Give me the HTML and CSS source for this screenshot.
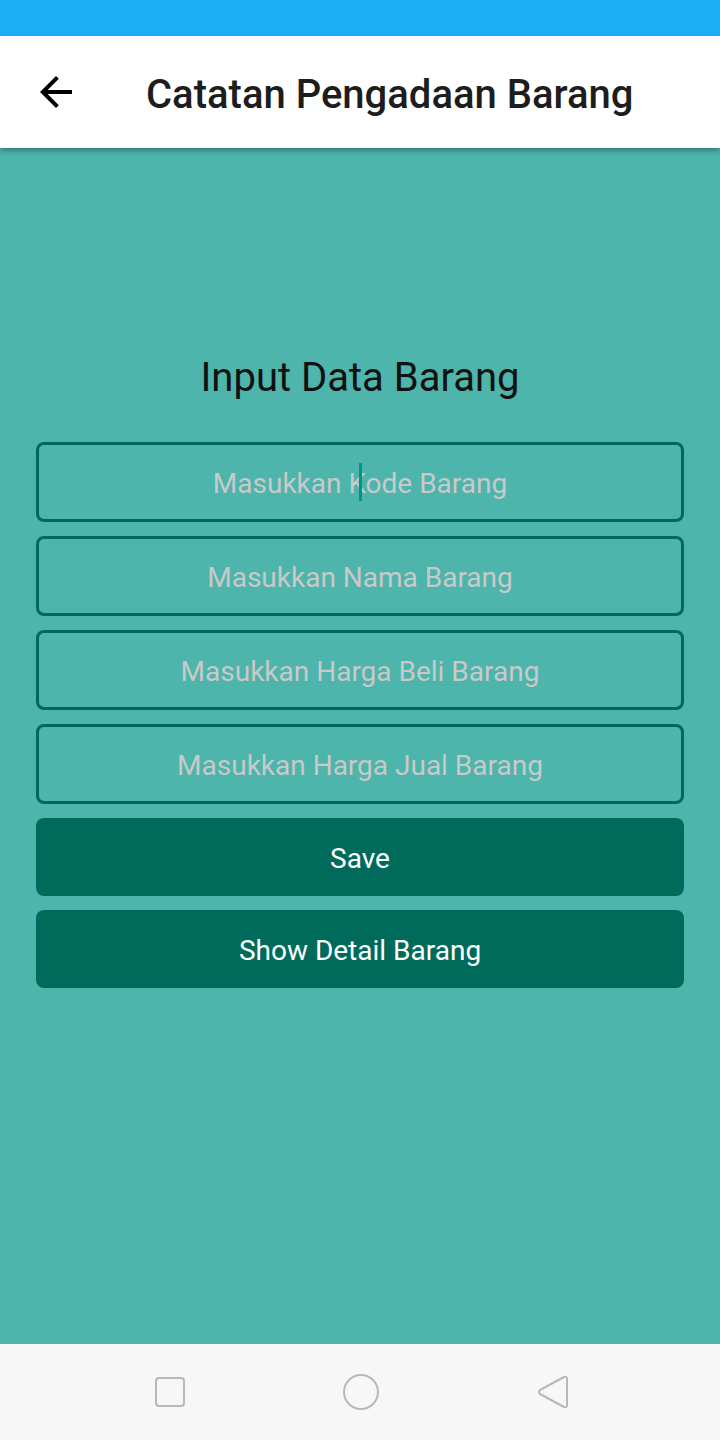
FILE: index.html
```html
<!DOCTYPE html>
<html>
<head>
<meta charset="utf-8">
<link rel="stylesheet" href="styles.css">
</head>
<body>
<div class="screen">
  <div class="status"></div>
  <header class="appbar">
    <svg class="back" width="48" height="48" viewBox="0 0 24 24"><path d="M20 11H7.83l5.59-5.59L12 4l-8 8 8 8 1.41-1.41L7.83 13H20v-2z" fill="#000"/></svg>
    <h1 class="apptitle">Catatan Pengadaan Barang</h1>
  </header>
  <main class="content">
    <h2 class="heading">Input Data Barang</h2>
    <div class="field focused"><span class="ph">Masukkan Kode Barang</span><span class="caret"></span></div>
    <div class="field"><span class="ph">Masukkan Nama Barang</span></div>
    <div class="field"><span class="ph">Masukkan Harga Beli Barang</span></div>
    <div class="field"><span class="ph">Masukkan Harga Jual Barang</span></div>
    <button class="btn">Save</button>
    <button class="btn">Show Detail Barang</button>
  </main>
  <nav class="navbar">
    <svg width="32" height="32" viewBox="0 0 32 32"><rect x="2" y="2" width="28" height="28" rx="3" fill="none" stroke="#b9b9b9" stroke-width="2"/></svg>
    <svg width="38" height="38" viewBox="0 0 38 38"><circle cx="19" cy="19" r="17" fill="none" stroke="#b9b9b9" stroke-width="2"/></svg>
    <svg width="34" height="36" viewBox="0 0 34 36"><path d="M28 3 Q31 2 31 5 L31 31 Q31 34 28 33 L4 20 Q2 18 4 16 Z" fill="none" stroke="#b9b9b9" stroke-width="2" stroke-linejoin="round"/></svg>
  </nav>
</div>
</body>
</html>
```

FILE: styles.css
```css
* { box-sizing: border-box; margin: 0; padding: 0; }
html, body { width: 720px; height: 1440px; overflow: hidden; }
body { font-family: Roboto, "Noto Sans", sans-serif; background: #4db5ab; }
.screen { display: flex; flex-direction: column; height: 1440px; }
.status { height: 36px; background: #1cadf4; flex: none; }
.appbar {
  height: 112px; background: #fff; flex: none;
  display: flex; align-items: center;
  box-shadow: 0 3px 5px rgba(0,0,0,0.3);
  position: relative; z-index: 1;
}
.back { margin-left: 32px; flex: none; }
.apptitle { margin-left: 66px; margin-top: 4px; font-size: 40px; font-weight: 500; color: #1d1d1d; letter-spacing: 0; }
.content {
  flex: 1; background: #4db5ab;
  display: flex; flex-direction: column; align-items: stretch;
  padding: 204px 36px 0;
}
.heading { text-align: center; font-weight: 400; font-size: 40px; color: #111; line-height: 52px; margin-bottom: 38px; }
.field {
  height: 80px; border: 3px solid #00695c; border-radius: 8px;
  display: flex; align-items: center; justify-content: center;
  margin-bottom: 14px; padding-top: 3px; position: relative;
}
.ph { color: #c9c9c9; font-size: 28px; }
.caret { position: absolute; left: 320px; top: 18px; width: 3px; height: 38px; background: #009587; }
.btn {
  height: 78px; border: none; border-radius: 8px; background: #006b5b;
  color: #fff; font-family: Roboto, sans-serif; font-size: 28px;
  margin-bottom: 14px; padding-top: 2px;
}
.navbar {
  height: 96px; flex: none; background: #f7f7f7;
  display: flex; align-items: center; justify-content: space-between;
  padding: 0 150px 0 154px;
}
```
